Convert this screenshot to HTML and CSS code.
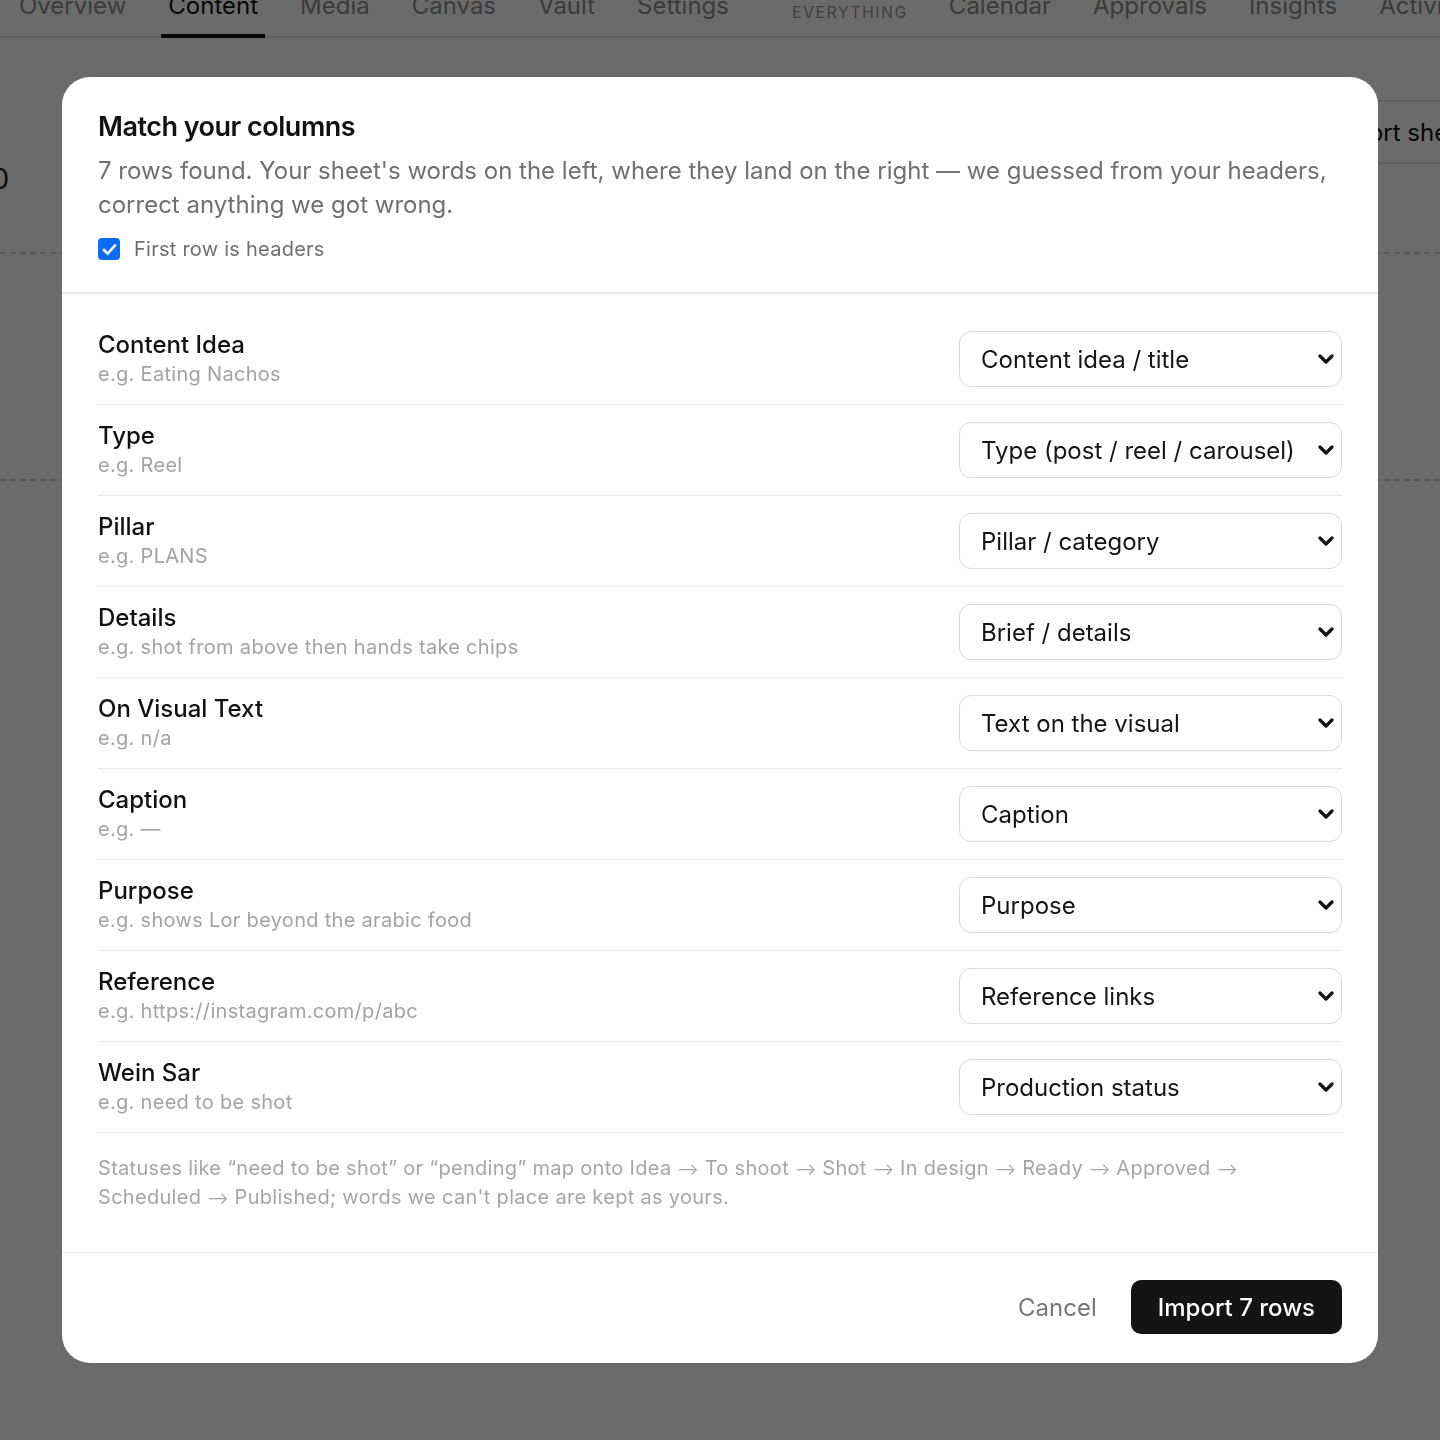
FILE: index.html
```html
<!DOCTYPE html>
<html lang="en">
<head>
  <meta charset="UTF-8">
  <meta name="viewport" content="width=device-width, initial-scale=1.0">
  <title>Content - Import</title>
  <link rel="stylesheet" href="styles.css">
</head>
<body>
  <!-- page behind the dialog -->
  <div class="app">
    <nav class="tabs">
      <a class="tab">Overview</a>
      <a class="tab active">Content</a>
      <a class="tab">Media</a>
      <a class="tab">Canvas</a>
      <a class="tab">Vault</a>
      <a class="tab">Settings</a>
      <span class="tab-divider"></span>
      <span class="tab-group">Everything</span>
      <a class="tab">Calendar</a>
      <a class="tab">Approvals</a>
      <a class="tab">Insights</a>
      <a class="tab">Activity</a>
    </nav>
    <div class="toolbar">
      <div class="stat">10</div>
      <button class="ghost-button">Import sheet</button>
    </div>
    <div class="dash-line first"></div>
    <div class="board"></div>
    <div class="dash-line"></div>
  </div>

  <div class="overlay">
    <div class="modal">
      <div class="modal-head">
        <h2 class="modal-title">Match your columns</h2>
        <p class="modal-desc">7 rows found. Your sheet's words on the left, where they land on the right — we guessed from your headers, correct anything we got wrong.</p>
        <label class="check-row">
          <span class="checkbox">
            <svg width="16" height="14" viewBox="0 0 16 14"><path d="M2 7.5l4 4L14 2.5" fill="none" stroke="#fff" stroke-width="2.8" stroke-linecap="round" stroke-linejoin="round"/></svg>
          </span>
          First row is headers
        </label>
      </div>

      <div class="modal-body">
        <div class="map-row">
          <div class="map-source">
            <div class="map-name">Content Idea</div>
            <div class="map-example">e.g. Eating Nachos</div>
          </div>
          <div class="select">Content idea / title<svg class="chev" viewBox="0 0 16 10"><path d="M2 2l6 6 6-6"/></svg></div>
        </div>
        <div class="map-row">
          <div class="map-source">
            <div class="map-name">Type</div>
            <div class="map-example">e.g. Reel</div>
          </div>
          <div class="select">Type (post / reel / carousel)<svg class="chev" viewBox="0 0 16 10"><path d="M2 2l6 6 6-6"/></svg></div>
        </div>
        <div class="map-row">
          <div class="map-source">
            <div class="map-name">Pillar</div>
            <div class="map-example">e.g. PLANS</div>
          </div>
          <div class="select">Pillar / category<svg class="chev" viewBox="0 0 16 10"><path d="M2 2l6 6 6-6"/></svg></div>
        </div>
        <div class="map-row">
          <div class="map-source">
            <div class="map-name">Details</div>
            <div class="map-example">e.g. shot from above then hands take chips</div>
          </div>
          <div class="select">Brief / details<svg class="chev" viewBox="0 0 16 10"><path d="M2 2l6 6 6-6"/></svg></div>
        </div>
        <div class="map-row">
          <div class="map-source">
            <div class="map-name">On Visual Text</div>
            <div class="map-example">e.g. n/a</div>
          </div>
          <div class="select">Text on the visual<svg class="chev" viewBox="0 0 16 10"><path d="M2 2l6 6 6-6"/></svg></div>
        </div>
        <div class="map-row">
          <div class="map-source">
            <div class="map-name">Caption</div>
            <div class="map-example">e.g. —</div>
          </div>
          <div class="select">Caption<svg class="chev" viewBox="0 0 16 10"><path d="M2 2l6 6 6-6"/></svg></div>
        </div>
        <div class="map-row">
          <div class="map-source">
            <div class="map-name">Purpose</div>
            <div class="map-example">e.g. shows Lor beyond the arabic food</div>
          </div>
          <div class="select">Purpose<svg class="chev" viewBox="0 0 16 10"><path d="M2 2l6 6 6-6"/></svg></div>
        </div>
        <div class="map-row">
          <div class="map-source">
            <div class="map-name">Reference</div>
            <div class="map-example">e.g. https://instagram.com/p/abc</div>
          </div>
          <div class="select">Reference links<svg class="chev" viewBox="0 0 16 10"><path d="M2 2l6 6 6-6"/></svg></div>
        </div>
        <div class="map-row">
          <div class="map-source">
            <div class="map-name">Wein Sar</div>
            <div class="map-example">e.g. need to be shot</div>
          </div>
          <div class="select">Production status<svg class="chev" viewBox="0 0 16 10"><path d="M2 2l6 6 6-6"/></svg></div>
        </div>

        <p class="map-note">Statuses like “need to be shot” or “pending” map onto Idea <span class="arr">⟶</span> To shoot <span class="arr">⟶</span> Shot <span class="arr">⟶</span> In design <span class="arr">⟶</span> Ready <span class="arr">⟶</span> Approved <span class="arr">⟶</span> Scheduled <span class="arr">⟶</span> Published; words we can't place are kept as yours.</p>
      </div>

      <div class="modal-foot">
        <button class="btn-cancel">Cancel</button>
        <button class="btn-primary">Import 7 rows</button>
      </div>
    </div>
  </div>
</body>
</html>
```

FILE: styles.css
```css
body {
  margin: 0;
  background: #fff;
  font-family: Inter, "Noto Sans", Arial, sans-serif;
  color: #111;
  overflow: hidden;
}

/* background app */
.app {
  margin-top: -24px;
}

.tabs {
  display: flex;
  align-items: center;
  gap: 28px;
  height: 60px;
  padding-left: 12px;
  border-bottom: 2px solid #e4e4e4;
  white-space: nowrap;
}

.tab {
  position: relative;
  padding: 0 7px;
  font-size: 24px;
  color: #8c8c8c;
  line-height: 60px;
}

.tab.active {
  color: #111;
}

.tab.active::after {
  content: "";
  position: absolute;
  left: 0;
  right: 0;
  bottom: -2px;
  height: 4px;
  background: #111;
}

.tab-divider {
  width: 2px;
  height: 44px;
  background: #e0e0e0;
  margin-top: 16px;
}

.tab-group {
  font-size: 16px;
  letter-spacing: 1.4px;
  text-transform: uppercase;
  color: #9a9a9a;
  padding-top: 12px;
  margin-right: 6px;
}

.toolbar {
  display: flex;
  justify-content: space-between;
  align-items: flex-start;
  padding-top: 62px;
}

.stat {
  font-size: 28px;
  margin-left: -20px;
  margin-top: 62px;
  color: #222;
}

.ghost-button {
  margin-right: -60px;
  height: 64px;
  padding: 0 28px;
  border: 2px solid #e2e2e2;
  border-radius: 12px;
  background: #fff;
  font-family: inherit;
  font-size: 24px;
  color: #111;
}

.dash-line {
  border-top: 2px dashed #cfcfcf;
  margin-top: 22px;
}

.dash-line.first {
  margin-top: 56px;
}

.board {
  height: 203px;
}

/* dialog */
.overlay {
  position: fixed;
  inset: 0;
  background: rgba(0, 0, 0, 0.58);
  display: flex;
  align-items: center;
  justify-content: center;
}

.modal {
  width: 1316px;
  background: #fff;
  border-radius: 28px;
  overflow: hidden;
}

.modal-head {
  padding: 33px 36px 29px;
  border-bottom: 2px solid #e9e9e9;
}

.modal-title {
  margin: 0;
  font-size: 27px;
  line-height: 34px;
  font-weight: 600;
  letter-spacing: -0.5px;
  color: #111;
}

.modal-desc {
  margin: 10px 0 0;
  font-size: 24px;
  line-height: 34px;
  color: #707070;
}

.check-row {
  display: flex;
  align-items: center;
  gap: 14px;
  margin-top: 13px;
  font-size: 20px;
  line-height: 28px;
  letter-spacing: 0.25px;
  color: #6f6f6f;
}

.checkbox {
  width: 22px;
  height: 22px;
  border-radius: 4px;
  background: #0b6cf5;
  display: flex;
  align-items: center;
  justify-content: center;
}

.checkbox svg {
  width: 15px;
  height: 13px;
}

.modal-body {
  padding: 20px 36px 40px;
}

.map-row {
  display: flex;
  justify-content: space-between;
  align-items: center;
  padding: 17px 0;
  border-bottom: 1px solid #ececec;
}

.map-name {
  font-size: 24px;
  line-height: 28px;
  font-weight: 500;
  color: #111;
}

.map-example {
  margin-top: 2px;
  font-size: 20px;
  line-height: 26px;
  letter-spacing: 0.3px;
  color: #a3a3a3;
}

.select {
  box-sizing: border-box;
  width: 383px;
  height: 56px;
  display: flex;
  align-items: center;
  justify-content: space-between;
  padding: 0 7px 0 21px;
  border: 1.5px solid #d9d9d9;
  border-radius: 12px;
  font-size: 24px;
  color: #151515;
  background: #fff;
}

.chev {
  width: 16px;
  height: 10px;
  fill: none;
  stroke: #111;
  stroke-width: 3.2;
  stroke-linecap: round;
  stroke-linejoin: round;
}

.map-note {
  margin: 21px 0 0;
  font-size: 20px;
  line-height: 28px;
  letter-spacing: 0.3px;
  color: #a6a6a6;
}

.arr {
  font-size: 16px;
  letter-spacing: 0;
}

.modal-foot {
  display: flex;
  justify-content: flex-end;
  align-items: center;
  gap: 34px;
  padding: 27px 36px 29px;
  border-top: 1.5px solid #e9e9e9;
}

.btn-cancel {
  border: none;
  background: none;
  padding: 0;
  font-family: inherit;
  font-size: 24px;
  color: #777;
}

.btn-primary {
  height: 54px;
  padding: 0 27px;
  border: none;
  border-radius: 10px;
  background: #141414;
  color: #fff;
  font-family: inherit;
  font-size: 24px;
  font-weight: 500;
}
```
